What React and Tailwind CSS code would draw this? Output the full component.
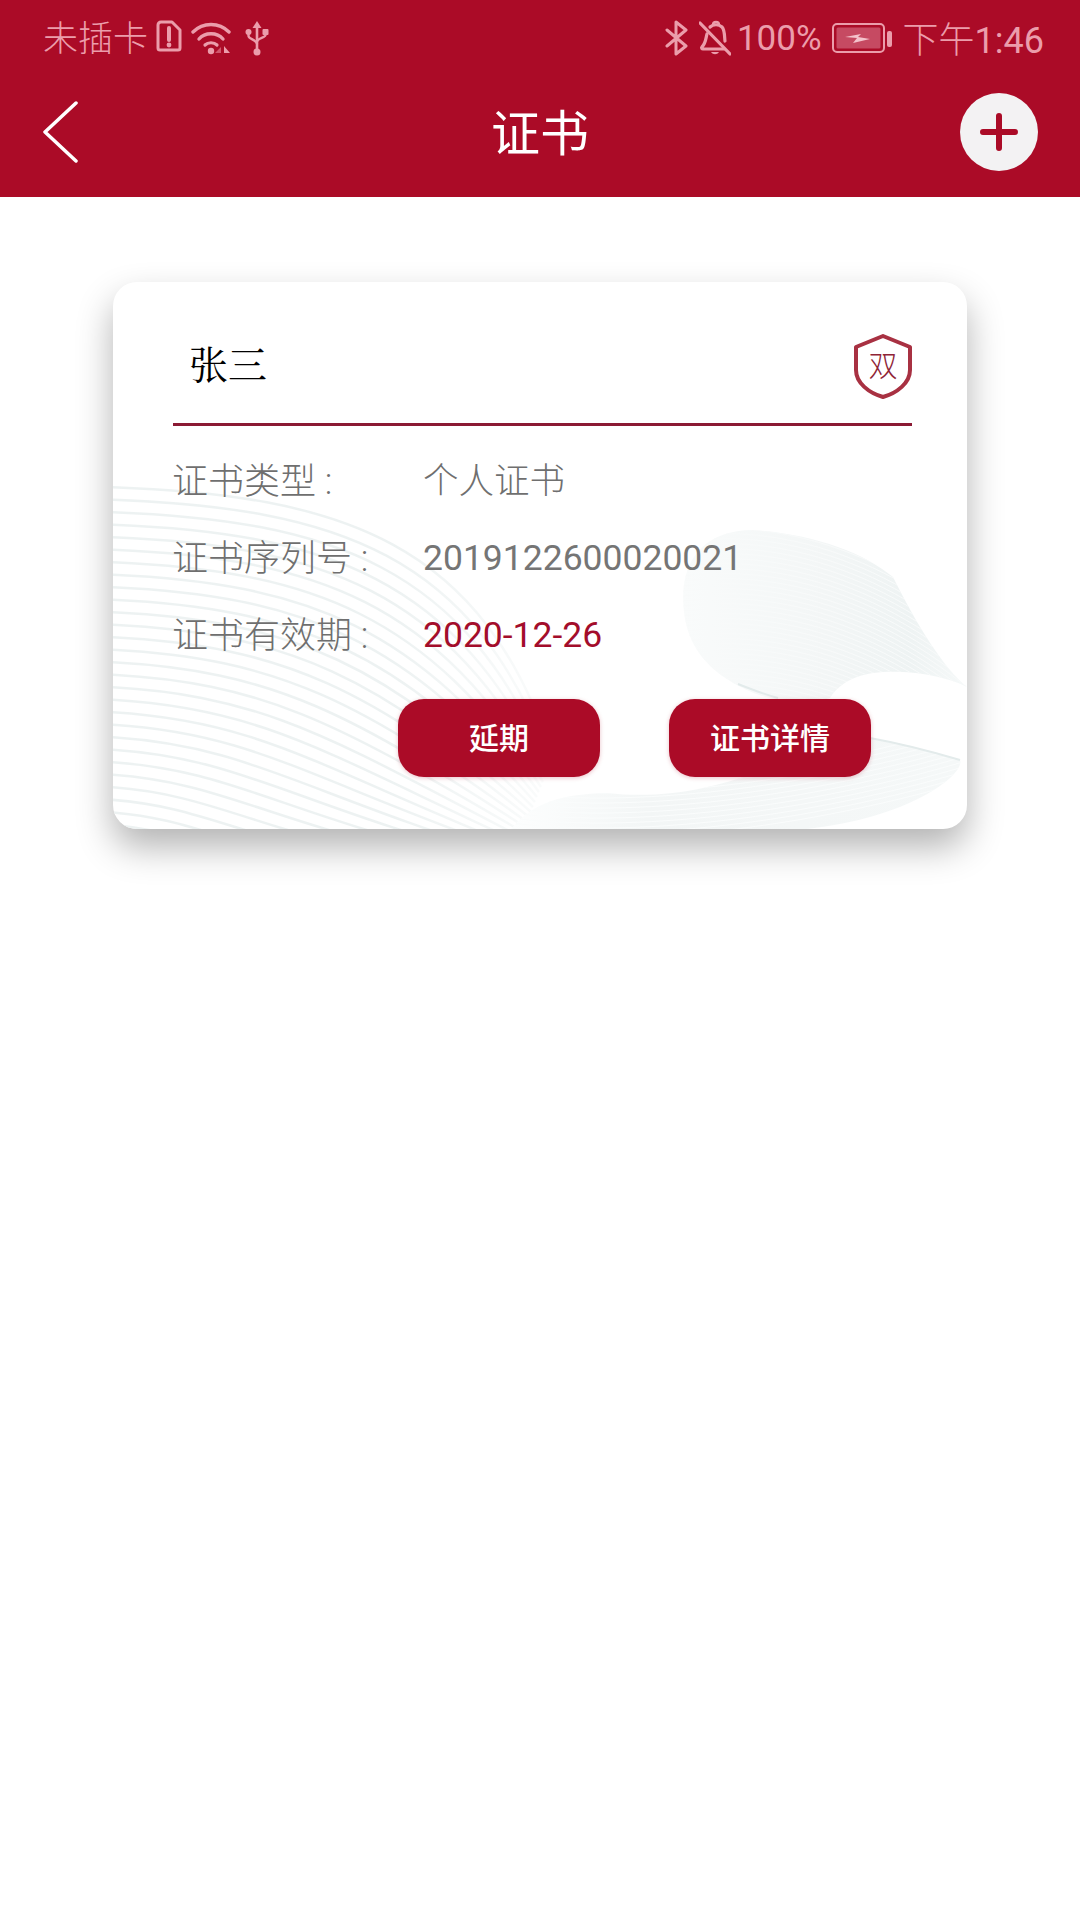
import React from "react";

const sansFont = "font-['Roboto','Noto_Sans_CJK_SC',sans-serif]";

const bulbPath = "M571 330C565 280 590 248 640 248C700 252 750 270 780 295C805 345 830 385 854 405C825 390 770 385 744 395C730 400 722 408 717 416C690 425 655 418 634 408C595 390 575 365 571 330Z";
const bandPath = "M398 547C420 520 450 512 494 511C570 520 640 495 690 470L757 456C800 465 830 472 847 478C852 492 800 535 694 547Z";

function SimIcon() {
  return (
    <svg width="26" height="32" viewBox="0 0 26 32" fill="none">
      <path d="M5 2h11l8 8v18a2 2 0 0 1-2 2H4a2 2 0 0 1-2-2V5a3 3 0 0 1 3-3z" stroke="#eb9dab" strokeWidth="3" strokeLinejoin="round" />
      <path d="M13 8v12" stroke="#eb9dab" strokeWidth="4" strokeLinecap="round" />
      <circle cx="13" cy="25" r="2.4" fill="#eb9dab" />
    </svg>
  );
}

function WifiIcon() {
  return (
    <svg width="40" height="34" viewBox="0 0 40 34" fill="none">
      <path d="M2 11C12 1 28 1 38 11" stroke="#eb9dab" strokeWidth="3.4" strokeLinecap="round" />
      <path d="M8 18C14 11 26 11 32 18" stroke="#eb9dab" strokeWidth="3.4" strokeLinecap="round" />
      <path d="M14 24c3-3 9-3 12 0" stroke="#eb9dab" strokeWidth="3.2" strokeLinecap="round" />
      <circle cx="20" cy="30" r="3.2" fill="#eb9dab" />
      <path d="M30 32l-6 0 6-6z" fill="#d0566c" />
      <path d="M33 25l6 7h-6z" fill="#eb9dab" />
    </svg>
  );
}

function UsbIcon() {
  return (
    <svg width="24" height="36" viewBox="0 0 24 36" fill="none">
      <path d="M12 1l4.5 7h-9z" fill="#eb9dab" />
      <path d="M12 6v26" stroke="#eb9dab" strokeWidth="2.6" />
      <path d="M3.5 12v4c0 3 8.5 4 8.5 8" stroke="#eb9dab" strokeWidth="2.4" />
      <path d="M20.5 12v3c0 3-8.5 3-8.5 7" stroke="#eb9dab" strokeWidth="2.4" />
      <circle cx="3.5" cy="12" r="3" fill="#eb9dab" />
      <rect x="17.5" y="9" width="6" height="6" rx="1" fill="#eb9dab" />
      <circle cx="12" cy="32" r="3.5" fill="#eb9dab" />
    </svg>
  );
}

function BluetoothIcon() {
  return (
    <svg width="24" height="36" viewBox="0 0 24 36" fill="none">
      <path d="M2 10l19 16-10 8V2l10 8-19 16" stroke="#eb9dab" strokeWidth="3" strokeLinejoin="round" strokeLinecap="round" />
    </svg>
  );
}

function BellOffIcon() {
  return (
    <svg width="32" height="36" viewBox="0 0 32 36" fill="none">
      <path d="M8 14c-1 3-1 9-5 13-1 1 0 2 1 2h21" stroke="#eb9dab" strokeWidth="3.2" strokeLinecap="round" />
      <path d="M11 7c3-3 9-3 12 0 3 3 2.5 12 3 14" stroke="#eb9dab" strokeWidth="3.2" strokeLinecap="round" />
      <path d="M14 5c0-4 6-4 6 0" stroke="#eb9dab" strokeWidth="2.4" />
      <path d="M12 32c2 3 6 3 8 0z" fill="#eb9dab" />
      <path d="M1 3l30 31" stroke="#eb9dab" strokeWidth="3.2" strokeLinecap="round" />
    </svg>
  );
}

function BatteryIcon() {
  return (
    <svg width="60" height="32" viewBox="0 0 60 32" fill="none">
      <rect x="1" y="2" width="51" height="28" rx="4" stroke="#eb9dab" strokeWidth="2" />
      <rect x="4.5" y="5.5" width="44" height="21" rx="1.5" fill="#c64a62" />
      <path d="M13 15l16-3-3 3 12 2-17 4 4-5z" fill="#f4c3cc" />
      <rect x="55" y="9" width="5" height="16" rx="2" fill="#eb9dab" />
    </svg>
  );
}

function ShieldIcon() {
  return (
    <svg width="58" height="65" viewBox="0 0 58 65" fill="none">
      <path d="M29 2l27 11v23c0 13-13 23-27 27C15 59 2 49 2 36V13z" stroke="#a83142" strokeWidth="4" strokeLinejoin="round" />
      <text x="29" y="43" textAnchor="middle" fontSize="29" fill="#8f2436" fontFamily="Noto Sans CJK SC, sans-serif" fontWeight="300">双</text>
    </svg>
  );
}

// 卡片底纹：左下的细线和右边的丝带
function CardTexture() {
  const waves = Array.from({ length: 30 }, (_, i) => {
    const y = 205 + i * 12.5;
    const bend = 1 - i / 36;
    return `M-5 ${y} C ${170 * bend + 60} ${y + 8} ${330 * bend + 40} ${y + 55} ${440 - i * 2} ${y + 270 * bend}`;
  });
  const bulbLines = Array.from({ length: 40 }, (_, i) => {
    const y = 240 + i * 5;
    return `M540 ${y} C 620 ${y - 20} 740 ${y - 10} 860 ${y + 90}`;
  });
  const bandLines = Array.from({ length: 12 }, (_, i) => {
    const y = 495 + i * 5;
    return `M390 ${y} C 520 ${y + 18} 700 ${y - 6} 850 ${y - 50}`;
  });

  return (
    <svg className="absolute inset-0" width="854" height="547" viewBox="0 0 854 547" fill="none">
      <defs>
        <clipPath id="bulb"><path d={bulbPath} /></clipPath>
        <clipPath id="band"><path d={bandPath} /></clipPath>
        <linearGradient id="waveFade" gradientUnits="userSpaceOnUse" x1="280" y1="0" x2="440" y2="0">
          <stop offset="0" stopColor="#edf2f2" />
          <stop offset="1" stopColor="#fbfcfc" />
        </linearGradient>
        <linearGradient id="bulbFill" x1="0" y1="0" x2="1" y2="0">
          <stop offset="0" stopColor="#f9fbfb" />
          <stop offset="0.5" stopColor="#f3f6f6" />
          <stop offset="0.8" stopColor="#eef3f3" />
          <stop offset="1" stopColor="#f6f9f9" />
        </linearGradient>
        <linearGradient id="bandFill" x1="0" y1="0" x2="1" y2="0">
          <stop offset="0" stopColor="#fdfefe" />
          <stop offset="0.3" stopColor="#f3f6f6" />
          <stop offset="1" stopColor="#f5f8f8" />
        </linearGradient>
      </defs>
      {waves.map((d, i) => (
        <path key={i} d={d} stroke="url(#waveFade)" strokeWidth="2.5" />
      ))}
      <path d={bulbPath} fill="url(#bulbFill)" />
      <g clipPath="url(#bulb)">
        {bulbLines.map((d, i) => (
          <path key={i} d={d} stroke="#f8fafa" strokeWidth="1" />
        ))}
      </g>
      <path d={bandPath} fill="url(#bandFill)" />
      <g clipPath="url(#band)">
        {bandLines.map((d, i) => (
          <path key={i} d={d} stroke="#fafcfc" strokeWidth="1" />
        ))}
      </g>
      <path d="M757 456C790 462 820 470 847 478" stroke="#e3ebeb" strokeWidth="2" />
      <path d="M625 402C640 408 650 412 665 416" stroke="#e3ebeb" strokeWidth="2" />
    </svg>
  );
}

function InfoRow({ label, value, valueClass }) {
  return (
    <div className="flex h-[77px] items-center">
      <div className="w-[251px] text-[36px] font-light text-[#6f6f6f]">{label}</div>
      <div className={`text-[35.5px] ${valueClass}`}>{value}</div>
    </div>
  );
}

export default function App() {
  return (
    <div className={`min-h-[1920px] bg-white ${sansFont}`}>
      <header className="h-[197px] bg-[#ab0b27]">
        {/* 状态栏 */}
        <div className="flex h-[75px] items-center justify-between pl-[43px] pr-[36px] text-[35px] text-[#eb9dab]">
          <div className="flex items-center">
            <span className="pt-[6px] font-light">未插卡</span>
            <span className="mb-[4px] ml-[8px] flex"><SimIcon /></span>
            <span className="ml-[9px] flex"><WifiIcon /></span>
            <span className="ml-[14px] flex"><UsbIcon /></span>
          </div>
          <div className="flex items-center">
            <BluetoothIcon />
            <span className="ml-[10px] flex"><BellOffIcon /></span>
            <span className="ml-[6px] pt-[4px]">100%</span>
            <span className="ml-[10px] flex"><BatteryIcon /></span>
            <span className="ml-[11px] pt-[6px] text-[36px]"><span className="font-light">下午</span>1:46</span>
          </div>
        </div>
        {/* 标题栏 */}
        <div className="grid h-[122px] grid-cols-[1fr_auto_1fr] items-center pb-[8px] pl-[42px] pr-[42px]">
          <svg width="36" height="62" viewBox="0 0 36 62" fill="none">
            <path d="M34 2L3 31l31 29" stroke="#fff" strokeWidth="3.5" strokeLinecap="round" strokeLinejoin="round" />
          </svg>
          <h1 className="pt-[4px] text-[49px] font-normal leading-none text-white">证书</h1>
          <button className="flex h-[78px] w-[78px] items-center justify-center justify-self-end rounded-full bg-[#f3f2f3]">
            <svg width="38" height="38" viewBox="0 0 38 38" fill="none">
              <path d="M19 3v32M3 19h32" stroke="#ab0b27" strokeWidth="6" strokeLinecap="round" />
            </svg>
          </button>
        </div>
      </header>

      <main className="pl-[113px] pt-[85px]">
        <section className="relative h-[547px] w-[854px] overflow-hidden rounded-[24px] bg-white shadow-[0_18px_36px_rgba(0,0,0,0.3)]">
          <CardTexture />
          <div className="relative pl-[60px] pr-[55px]">
            <div className="flex h-[144px] items-center justify-between border-b-[3px] border-[#8b1a34] pl-[16px] pt-[28px]">
              <span className="font-['Liberation_Serif','Noto_Serif_CJK_SC',serif] text-[39px] text-black">张三</span>
              <ShieldIcon />
            </div>
            <div className="-ml-[1px] pt-[17px]">
              <InfoRow label="证书类型 :" value={<span className="font-light">个人证书</span>} valueClass="text-[#6f6f6f]" />
              <InfoRow label="证书序列号 :" value="2019122600020021" valueClass="text-[#757575]" />
              <InfoRow label="证书有效期 :" value="2020-12-26" valueClass="text-[#a30d2b]" />
            </div>
            <div className="mt-[25px] flex gap-[69px] pl-[225px]">
              <button className="h-[78px] w-[202px] rounded-[26px] bg-[#ab0b27] text-[30px] font-medium text-white shadow-[0_1px_4px_rgba(171,11,39,0.25)]">延期</button>
              <button className="h-[78px] w-[202px] rounded-[26px] bg-[#ab0b27] text-[30px] font-medium text-white shadow-[0_1px_4px_rgba(171,11,39,0.25)]">证书详情</button>
            </div>
          </div>
        </section>
      </main>
    </div>
  );
}
